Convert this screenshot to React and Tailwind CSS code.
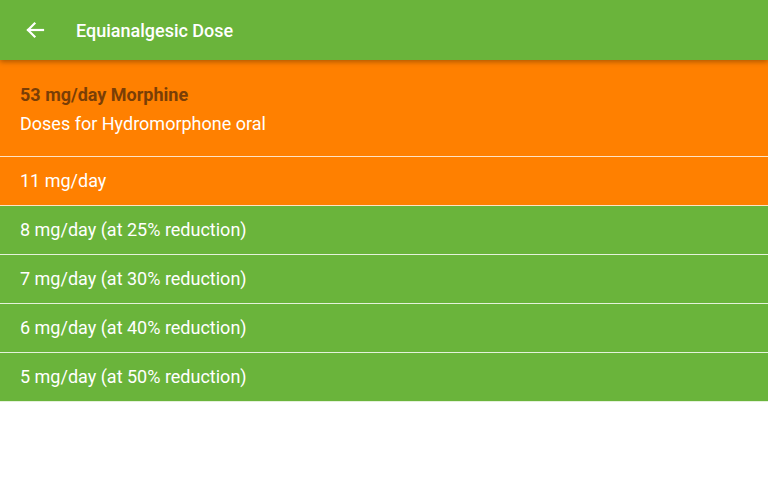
import React from "react";

const rows = [
  { text: "11 mg/day", orange: true },
  { text: "8 mg/day (at 25% reduction)" },
  { text: "7 mg/day (at 30% reduction)" },
  { text: "6 mg/day (at 40% reduction)" },
  { text: "5 mg/day (at 50% reduction)" },
];

export default function App() {
  return (
    <div className="w-[768px] h-[481px] bg-white overflow-hidden" style={{ fontFamily: "Roboto, 'Noto Sans', sans-serif" }}>
      <div className="relative z-10 h-[60px] bg-[#6ab43b] flex items-center shadow-[0_2px_5px_rgba(0,0,0,0.3)]">
        <div className="w-[70px] flex items-center pl-[23px]">
          <svg width="24" height="24" viewBox="0 0 24 24" fill="none" stroke="white" strokeWidth="2.2" strokeLinecap="square">
            <path d="M20 12H5" />
            <path d="M11.5 5.5L5 12l6.5 6.5" />
          </svg>
        </div>
        <div className="pl-[6px] text-white text-[18px] font-medium">Equianalgesic Dose</div>
      </div>
      <div className="bg-[#ff8000] h-[97px] pl-5 pt-[23px] border-b border-[#ffe3c4]">
        <div className="text-[#7a3e06] font-bold text-[18px] leading-[24px]">53 mg/day Morphine</div>
        <div className="text-white text-[18px] leading-[24px] mt-[5px]">Doses for Hydromorphone oral</div>
      </div>
      {rows.map((r, i) => (
        <div
          key={i}
          className={
            (r.orange ? "bg-[#ff8000] border-[#ffe3c4]" : "bg-[#6ab43b] border-[#e4f2da]") +
            " h-[49px] border-b flex items-center pl-5 pb-[2px] text-white text-[18px]"
          }
        >
          {r.text}
        </div>
      ))}
    </div>
  );
}
